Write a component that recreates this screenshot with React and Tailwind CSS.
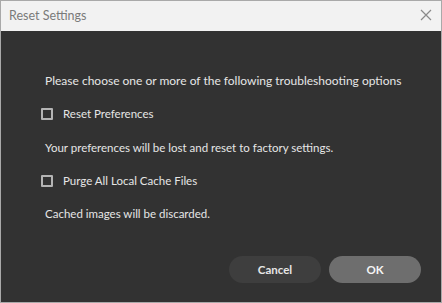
import React from "react";

function Check({ label, className }) {
  return (
    <label className={"flex items-center h-[20px] " + className}>
      <span className="w-[12px] h-[12px] border-2 border-[#b4b4b4] rounded-[1px] ml-[40px]" />
      <span className="ml-[10px] text-[11.5px] text-[#e6e6e6]">{label}</span>
    </label>
  );
}

export default function App() {
  return (
    <div
      className="w-[442px] h-[303px] border border-[#a9a9a9] flex flex-col bg-[#323232]"
      style={{ fontFamily: 'Lato, sans-serif' }}
    >
      <div className="h-[30px] bg-[#f2f2f2] flex items-center justify-between pl-[8px] pr-[9px] shrink-0">
        <span className="text-[12.5px] text-[#7a7a7a]">Reset Settings</span>
        <svg width="12" height="12" viewBox="0 0 12 12" className="mb-[2px]">
          <path d="M1 1 L11 11 M11 1 L1 11" stroke="#8a8a8a" strokeWidth="1.2" />
        </svg>
      </div>
      <div className="flex-1 flex flex-col text-[#e6e6e6]">
        <p className="text-[12px] ml-[44px] mt-[42px] leading-[16px]">
          Please choose one or more of the following troubleshooting options
        </p>
        <Check label="Reset Preferences" className="mt-[15px]" />
        <p className="text-[11.5px] ml-[44px] mt-[16px] leading-[16px]">
          Your preferences will be lost and reset to factory settings.
        </p>
        <Check label="Purge All Local Cache Files" className="mt-[15px]" />
        <p className="text-[11.5px] ml-[44px] mt-[15px] leading-[16px]">
          Cached images will be discarded.
        </p>
        <div className="flex justify-end gap-[8px] mt-auto mb-[19px] mr-[20px]">
          <button className="w-[92px] h-[27px] rounded-full bg-[#3e3e3e] text-[11.5px] font-bold text-[#e6e6e6]">
            Cancel
          </button>
          <button className="w-[92px] h-[27px] rounded-full bg-[#6e6e6e] text-[11.5px] font-bold text-[#f5f5f5]">
            OK
          </button>
        </div>
      </div>
    </div>
  );
}
